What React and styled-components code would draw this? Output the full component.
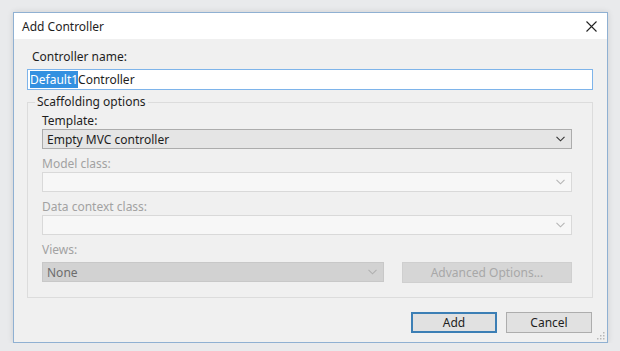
import React from 'react';
import styled, { createGlobalStyle } from 'styled-components';

const Global = createGlobalStyle`
  html, body {
    margin: 0;
    background: #e9eaec;
  }
  body {
    font-family: "Noto Sans", "Open Sans", sans-serif;
    font-size: 12px;
    color: #1e1e1e;
  }
`;

const Page = styled.div`
  padding: 12px 0 0 13px;
`;

const Dialog = styled.div`
  position: relative;
  width: 593px;
  height: 329px;
  border: 1px solid #8fb0d2;
  background: #f0f0f0;
  box-shadow: 0 0 6px rgba(0, 0, 0, 0.12);
  display: flex;
  flex-direction: column;
`;

const TitleBar = styled.div`
  height: 26px;
  background: #fff;
  display: flex;
  align-items: center;
  justify-content: space-between;
  padding: 0 10px 0 8px;
`;

const Title = styled.span`
  font-size: 12px;
`;

const Body = styled.div`
  flex: 1;
  display: flex;
  flex-direction: column;
  padding: 10px 14px 0 13px;
`;

const Label = styled.div`
  line-height: 16px;
  height: 16px;
  padding-left: ${p => (p.$indent ? 5 : 0)}px;
  color: ${p => (p.$disabled ? '#a2a2a2' : '#1e1e1e')};
`;

const NameBox = styled.div`
  margin-top: 4px;
  height: 19px;
  border: 1px solid #7eb4ea;
  background: #fff;
  display: flex;
  align-items: center;
  padding-left: 2px;
`;

const Selected = styled.span`
  background: #3390e0;
  color: #fff;
`;

const Group = styled.fieldset`
  margin: 4px 0 0 0;
  padding: 3px 20px 14px 14px;
  border: 1px solid #dcdcdc;
  min-width: 0;
`;

const Legend = styled.legend`
  margin-left: -7px;
  padding: 0 2px;
  line-height: 16px;
`;

const Field = styled.div`
  margin-top: ${p => p.$top || 0}px;
`;

const Select = styled.div`
  height: 18px;
  display: flex;
  align-items: center;
  justify-content: space-between;
  padding: 0 6px 0 4px;
  ${p =>
    p.$variant === 'active'
      ? 'background:#e5e5e5;border:1px solid #acacac;color:#1e1e1e;'
      : p.$variant === 'grey'
      ? 'background:#d2d2d2;border:1px solid #c8c8c8;color:#6d6d6d;'
      : 'background:#f7f7f7;border:1px solid #d9d9d9;color:#a0a0a0;'}
`;

const Row = styled.div`
  display: flex;
  gap: 18px;
  margin-top: 4px;
  align-items: flex-start;
`;

const ViewsSelect = styled(Select)`
  flex: 0 0 330px;
`;

const Button = styled.div`
  box-sizing: border-box;
  height: 21px;
  display: flex;
  align-items: center;
  justify-content: center;
  background: ${p => (p.$disabled ? '#d6d6d6' : '#e1e1e1')};
  border: ${p => (p.$primary ? '2px solid #3c7fb5' : p.$disabled ? '1px solid #cfcfcf' : '1px solid #adadad')};
  color: ${p => (p.$disabled ? '#a8a8a8' : '#1e1e1e')};
  width: ${p => p.$w}px;
`;

const Footer = styled.div`
  display: flex;
  justify-content: flex-end;
  gap: 9px;
  margin-top: 14px;
  padding-right: 1px;
`;

const Grip = styled.svg`
  position: absolute;
  right: 2px;
  bottom: 2px;
`;

const Chevron = ({ color }) => (
  <svg width="9" height="6" viewBox="0 0 9 6">
    <path d="M0.5 0.8 L4.5 4.8 L8.5 0.8" fill="none" stroke={color} strokeWidth="1.1" />
  </svg>
);

const Close = () => (
  <svg width="11" height="11" viewBox="0 0 11 11">
    <path d="M0.5 0.5 L10.5 10.5 M10.5 0.5 L0.5 10.5" stroke="#222" strokeWidth="1.1" />
  </svg>
);

export default function App() {
  return (
    <Page>
      <Global />
      <Dialog>
        <TitleBar>
          <Title>Add Controller</Title>
          <Close />
        </TitleBar>
        <Body>
          <Label $indent>Controller name:</Label>
          <NameBox>
            <Selected>Default1</Selected>Controller
          </NameBox>
          <Group>
            <Legend>Scaffolding options</Legend>
            <Field>
              <Label>Template:</Label>
              <Select $variant="active">
                <span>Empty MVC controller</span>
                <Chevron color="#333" />
              </Select>
            </Field>
            <Field $top={7}>
              <Label $disabled>Model class:</Label>
              <Select>
                <span />
                <Chevron color="#b5b5b5" />
              </Select>
            </Field>
            <Field $top={7}>
              <Label $disabled>Data context class:</Label>
              <Select>
                <span />
                <Chevron color="#b5b5b5" />
              </Select>
            </Field>
            <Field $top={7}>
              <Label $disabled>Views:</Label>
              <Row>
                <ViewsSelect $variant="grey">
                  <span>None</span>
                  <Chevron color="#b0b0b0" />
                </ViewsSelect>
                <Button $disabled $w={170}>Advanced Options...</Button>
              </Row>
            </Field>
          </Group>
          <Footer>
            <Button $primary $w={86}>Add</Button>
            <Button $w={86}>Cancel</Button>
          </Footer>
        </Body>
        <Grip width="8" height="8" viewBox="0 0 8 8">
          <rect x="6" y="0" width="1.5" height="1.5" fill="#b8b8b8" />
          <rect x="3" y="3" width="1.5" height="1.5" fill="#b8b8b8" />
          <rect x="6" y="3" width="1.5" height="1.5" fill="#b8b8b8" />
          <rect x="0" y="6" width="1.5" height="1.5" fill="#b8b8b8" />
          <rect x="3" y="6" width="1.5" height="1.5" fill="#b8b8b8" />
          <rect x="6" y="6" width="1.5" height="1.5" fill="#b8b8b8" />
        </Grip>
      </Dialog>
    </Page>
  );
}
